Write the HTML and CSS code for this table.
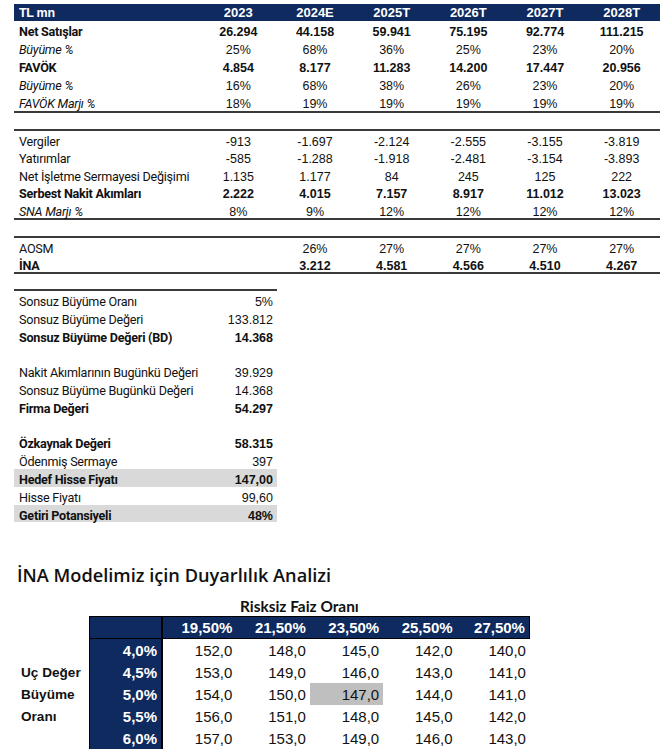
FILE: index.html
```html
<!DOCTYPE html>
<html lang="tr">
<head>
<meta charset="utf-8">
<title>İNA Değerleme</title>
<link rel="stylesheet" href="styles.css">
</head>
<body>
<div class="page">
  <section class="proj">
    <div class="row head"><span class="lbl">TL mn</span><span>2023</span><span>2024E</span><span>2025T</span><span>2026T</span><span>2027T</span><span>2028T</span></div>
    <div class="group g1">
      <div class="row b"><span class="lbl">Net Satışlar</span><span>26.294</span><span>44.158</span><span>59.941</span><span>75.195</span><span>92.774</span><span>111.215</span></div>
      <div class="row"><span class="lbl it">Büyüme %</span><span>25%</span><span>68%</span><span>36%</span><span>25%</span><span>23%</span><span>20%</span></div>
      <div class="row b"><span class="lbl">FAVÖK</span><span>4.854</span><span>8.177</span><span>11.283</span><span>14.200</span><span>17.447</span><span>20.956</span></div>
      <div class="row"><span class="lbl it">Büyüme %</span><span>16%</span><span>68%</span><span>38%</span><span>26%</span><span>23%</span><span>20%</span></div>
      <div class="row"><span class="lbl it">FAVÖK Marjı %</span><span>18%</span><span>19%</span><span>19%</span><span>19%</span><span>19%</span><span>19%</span></div>
    </div>
    <div class="group g2">
      <div class="row"><span class="lbl">Vergiler</span><span>-913</span><span>-1.697</span><span>-2.124</span><span>-2.555</span><span>-3.155</span><span>-3.819</span></div>
      <div class="row"><span class="lbl">Yatırımlar</span><span>-585</span><span>-1.288</span><span>-1.918</span><span>-2.481</span><span>-3.154</span><span>-3.893</span></div>
      <div class="row"><span class="lbl">Net İşletme Sermayesi Değişimi</span><span>1.135</span><span>1.177</span><span>84</span><span>245</span><span>125</span><span>222</span></div>
      <div class="row b"><span class="lbl">Serbest Nakit Akımları</span><span>2.222</span><span>4.015</span><span>7.157</span><span>8.917</span><span>11.012</span><span>13.023</span></div>
      <div class="row"><span class="lbl it">SNA Marjı %</span><span>8%</span><span>9%</span><span>12%</span><span>12%</span><span>12%</span><span>12%</span></div>
    </div>
    <div class="group g3">
      <div class="row"><span class="lbl">AOSM</span><span></span><span>26%</span><span>27%</span><span>27%</span><span>27%</span><span>27%</span></div>
      <div class="row b"><span class="lbl">İNA</span><span></span><span>3.212</span><span>4.581</span><span>4.566</span><span>4.510</span><span>4.267</span></div>
    </div>
  </section>

  <section class="val">
    <div class="vrow"><span>Sonsuz Büyüme Oranı</span><span>5%</span></div>
    <div class="vrow"><span>Sonsuz Büyüme Değeri</span><span>133.812</span></div>
    <div class="vrow b"><span>Sonsuz Büyüme Değeri (BD)</span><span>14.368</span></div>
    <div class="vrow blank"></div>
    <div class="vrow"><span>Nakit Akımlarının Bugünkü Değeri</span><span>39.929</span></div>
    <div class="vrow"><span>Sonsuz Büyüme Bugünkü Değeri</span><span>14.368</span></div>
    <div class="vrow b"><span>Firma Değeri</span><span>54.297</span></div>
    <div class="vrow blank"></div>
    <div class="vrow b"><span>Özkaynak Değeri</span><span>58.315</span></div>
    <div class="vrow"><span>Ödenmiş Sermaye</span><span>397</span></div>
    <div class="vrow b hl"><span>Hedef Hisse Fiyatı</span><span>147,00</span></div>
    <div class="vrow"><span>Hisse Fiyatı</span><span>99,60</span></div>
    <div class="vrow b hl"><span>Getiri Potansiyeli</span><span>48%</span></div>
  </section>

  <h2 class="title">İNA Modelimiz için Duyarlılık Analizi</h2>

  <section class="sens">
    <div class="sens-cap">Risksiz Faiz Oranı</div>
    <div class="grid">
      <div class="side"></div><div class="rate corner"></div>
      <div class="hd">19,50%</div><div class="hd">21,50%</div><div class="hd">23,50%</div><div class="hd">25,50%</div><div class="hd last">27,50%</div>

      <div class="side"></div><div class="rate">4,0%</div>
      <div class="v">152,0</div><div class="v">148,0</div><div class="v">145,0</div><div class="v">142,0</div><div class="v">140,0</div>

      <div class="side">Uç Değer</div><div class="rate">4,5%</div>
      <div class="v">153,0</div><div class="v">149,0</div><div class="v">146,0</div><div class="v">143,0</div><div class="v">141,0</div>

      <div class="side">Büyüme</div><div class="rate">5,0%</div>
      <div class="v">154,0</div><div class="v">150,0</div><div class="v sel">147,0</div><div class="v">144,0</div><div class="v">141,0</div>

      <div class="side">Oranı</div><div class="rate">5,5%</div>
      <div class="v">156,0</div><div class="v">151,0</div><div class="v">148,0</div><div class="v">145,0</div><div class="v">142,0</div>

      <div class="side"></div><div class="rate">6,0%</div>
      <div class="v">157,0</div><div class="v">153,0</div><div class="v">149,0</div><div class="v">146,0</div><div class="v">143,0</div>
    </div>
  </section>
</div>
</body>
</html>
```

FILE: styles.css
```css
html, body {
  margin: 0;
  padding: 0;
  background: #ffffff;
}

body {
  color: #111111;
  font-family: Roboto, "Liberation Sans", Arial, sans-serif;
}

.page {
  padding: 4px 0 0 14px;
}

/* ---------- projection table ---------- */
.proj {
  width: 646px;
}

.row {
  display: grid;
  grid-template-columns: 186px repeat(6, 1fr);
  height: 18px;
  box-sizing: border-box;
  padding-top: 3px;
  align-items: start;
  line-height: 16px;
}

.row > span {
  text-align: center;
  font-family: "Liberation Sans", Arial, sans-serif;
  font-size: 12.5px;
  white-space: nowrap;
}

.row > .lbl {
  text-align: left;
  padding-left: 5px;
  font-family: Roboto, "Liberation Sans", sans-serif;
  font-size: 12.6px;
  letter-spacing: -0.25px;
}

.row.head {
  height: 17px;
  padding-top: 1px;
  background: #0f2a5e;
  color: #ffffff;
}

.row.head > span {
  font-weight: 700;
  font-size: 13px;
}

.row.head > .lbl {
  font-family: "Liberation Sans", Arial, sans-serif;
  font-size: 12.5px;
  letter-spacing: -0.3px;
}

.b > span {
  font-weight: 700;
}

.it {
  font-style: italic;
}

.group {
  border-bottom: 2px solid #3a3a3a;
}

.g2,
.g3 {
  border-top: 2px solid #3a3a3a;
  margin-top: 16px;
}

.g2 .row {
  height: 17.4px;
}

.g3 .row {
  height: 17px;
}

/* ---------- valuation summary ---------- */
.val {
  width: 263px;
  margin-top: 15px;
  border-top: 2px solid #3a3a3a;
}

.vrow {
  display: flex;
  justify-content: space-between;
  height: 17.8px;
  box-sizing: border-box;
  padding: 3px 4px 0 5px;
  line-height: 16px;
  font-size: 12.6px;
  letter-spacing: -0.25px;
  white-space: nowrap;
}

.vrow > span:last-child {
  font-family: "Liberation Sans", Arial, sans-serif;
  font-size: 12.5px;
  letter-spacing: 0;
}

.vrow.b > span {
  font-weight: 700;
}

.vrow.hl {
  background: #d9d9d9;
}

/* ---------- sensitivity ---------- */
.title {
  margin: 41px 0 0 3px;
  font-family: "Open Sans", "Noto Sans", sans-serif;
  font-weight: 600;
  font-size: 18.2px;
  line-height: 24px;
  color: #111111;
}

.sens {
  margin-top: 9px;
}

.sens-cap {
  margin-left: 226px;
  font-family: Lato, "Liberation Sans", sans-serif;
  font-weight: 700;
  font-size: 15.4px;
  line-height: 20px;
  height: 20px;
}

.grid {
  display: grid;
  grid-template-columns: 75px 74px repeat(5, 73.4px);
  grid-template-rows: 23px repeat(5, 22px);
  font-family: "Liberation Sans", Arial, sans-serif;
  font-size: 15px;
}

.grid > div {
  display: flex;
  align-items: center;
  justify-content: flex-end;
  padding-right: 4px;
  white-space: nowrap;
}

.side {
  justify-content: flex-start !important;
  padding-left: 7px;
  font-weight: 700;
  font-size: 13.6px;
}

.rate {
  background: #0f2a5e;
  color: #ffffff;
  font-weight: 700;
  border-left: 1px solid #000;
  border-right: 2px solid #000;
}

.rate.corner {
  border-top: 1px solid #000;
  border-bottom: 1px solid #000;
}

.hd {
  background: #0f2a5e;
  color: #ffffff;
  font-weight: 700;
  border-top: 1px solid #000;
  border-bottom: 1px solid #000;
}

.hd.last {
  border-right: 1px solid #000;
}

.v {
  color: #111111;
}

.v.sel {
  background: #bfbfbf;
}
```
